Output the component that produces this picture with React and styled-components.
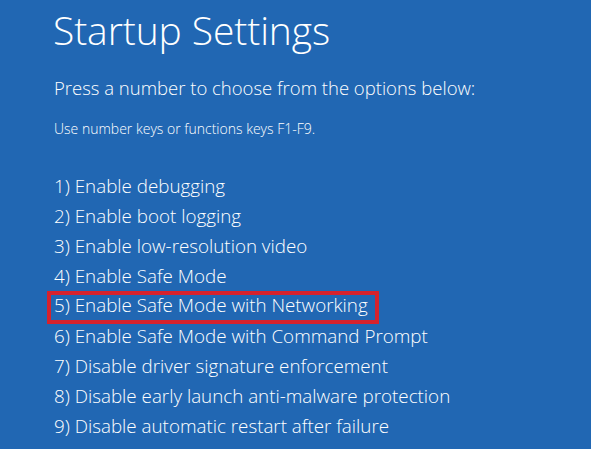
import React from 'react'
import styled, { createGlobalStyle } from 'styled-components'

const options = [
  'Enable debugging',
  'Enable boot logging',
  'Enable low-resolution video',
  'Enable Safe Mode',
  'Enable Safe Mode with Networking',
  'Enable Safe Mode with Command Prompt',
  'Disable driver signature enforcement',
  'Disable early launch anti-malware protection',
  'Disable automatic restart after failure',
]

const App = () => {
  return (
    <>
      <GlobalStyle />
      <Screen>
        <Title>Startup Settings</Title>
        <Prompt>Press a number to choose from the options below:</Prompt>
        <Hint>Use number keys or functions keys F1-F9.</Hint>
        <List>
          {options.map((text, i) => (
            <Item key={text} $selected={i === 4}>
              {i + 1}) {text}
            </Item>
          ))}
        </List>
      </Screen>
    </>
  )
}

const GlobalStyle = createGlobalStyle`
  html, body {
    margin: 0;
    padding: 0;
    background: #2167b3;
  }
`

const Screen = styled.div`
  width: 591px;
  height: 449px;
  overflow: hidden;
  box-sizing: border-box;
  padding: 5px 0 0 54px;
  background: #2167b3;
  color: #ffffff;
  font-family: 'Open Sans', 'Noto Sans', sans-serif;
  font-weight: 300;
`

const Title = styled.h1`
  margin: 0 0 0 -1px;
  font-size: 39px;
  font-weight: 300;
  line-height: 50px;
  letter-spacing: -0.1px;
`

const Prompt = styled.p`
  margin: 20px 0 0 0;
  font-size: 18.5px;
  line-height: 26px;
`

const Hint = styled.p`
  margin: 19px 0 0 0;
  font-size: 14px;
  line-height: 18px;
`

const List = styled.ul`
  list-style: none;
  margin: 33px 0 0 0;
  padding: 0;
`

const Item = styled.li`
  font-size: 18.8px;
  box-sizing: border-box;
  height: ${(p) => (p.$selected ? '33px' : '30px')};
  line-height: ${(p) => (p.$selected ? '21px' : '30px')};
  width: ${(p) => (p.$selected ? '332px' : 'auto')};
  margin: ${(p) => (p.$selected ? '0 0 -3px -7px' : '0')};
  padding-left: ${(p) => (p.$selected ? '3px' : '0')};
  border: ${(p) => (p.$selected ? '4px solid #d6222d' : 'none')};
`

export default App
